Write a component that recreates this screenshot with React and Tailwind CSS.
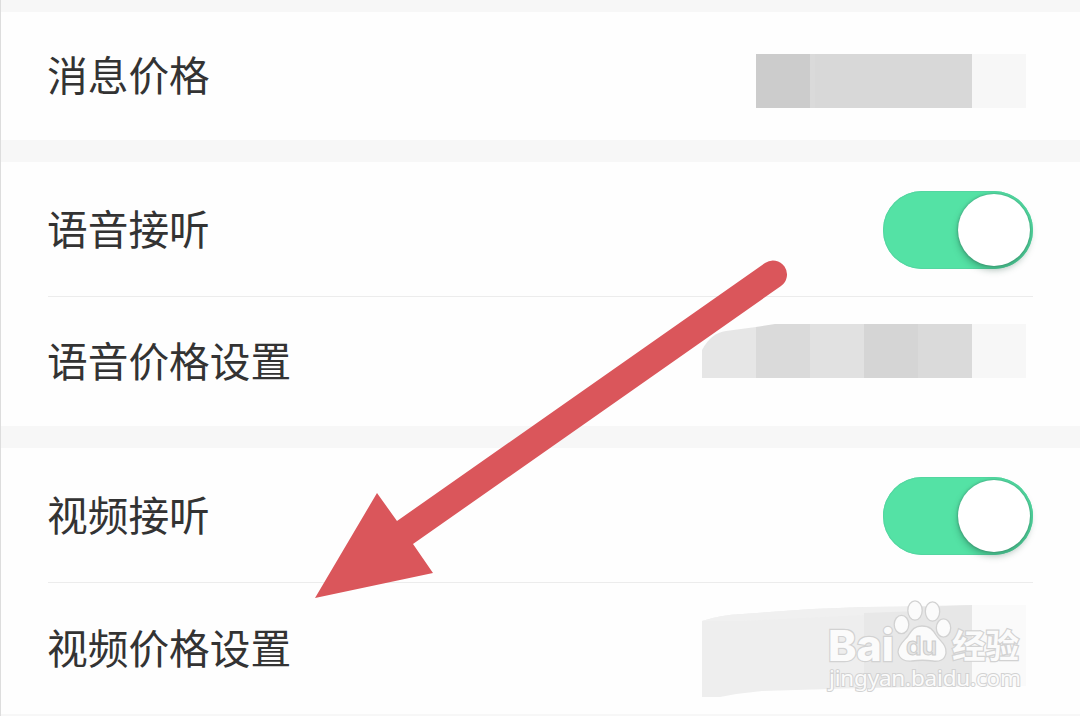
const voiceBlocks = [
  { x: 54, w: 54, fill: '#dadada' },
  { x: 108, w: 54, fill: '#e1e1e1' },
  { x: 162, w: 54, fill: '#d5d5d5' },
  { x: 216, w: 54, fill: '#dadada' },
]

function Toggle() {
  return (
    <div className="mt-[2px] flex h-[78px] w-[150px] items-center justify-end rounded-full bg-[#54e2a5] pr-[3px] shadow-[inset_0_0_0_1px_#54d6a1]">
      <div className="h-[72px] w-[72px] rounded-full bg-white shadow-[0_4px_7px_rgba(20,70,50,0.35),0_0_2px_1px_rgba(60,110,95,0.3)]" />
    </div>
  )
}

function Row({ label, divider, children, className = '' }) {
  return (
    <div className={`mx-[47px] flex items-center justify-between ${divider ? 'border-b border-[#ececec]' : ''} ${className}`}>
      <span className={`-ml-px text-[40.7px] leading-[60px] text-[#333333] ${divider ? 'mb-[2px]' : 'mb-[4px]'}`}>{label}</span>
      {children}
    </div>
  )
}

function MessagePrice() {
  return (
    <svg className="mr-[7px] mt-[10px] h-[54px] w-[270px]" viewBox="0 0 270 54" shapeRendering="crispEdges">
      <rect width="54" height="54" fill="#cccccc" />
      <rect x="54" width="162" height="54" fill="#d8d8d8" />
      <rect x="54" width="5" height="54" fill="#dadada" />
      <rect x="216" width="54" height="54" fill="#f7f7f7" />
    </svg>
  )
}

function VoicePrice() {
  return (
    <svg className="mr-[7px] mb-[21px] h-[54px] w-[324px]" viewBox="0 0 324 54">
      <path d="M0 54V26Q9 9 24 7L54 3V54Z" fill="#e6e6e6" />
      {voiceBlocks.map(b => (
        <path key={b.x} d={b.x === 54 ? 'M54 3L73 0H108V54H54Z' : `M${b.x} 0h${b.w}v54h-${b.w}Z`} fill={b.fill} />
      ))}
      <path d="M270 0H324V54H270Z" fill="#f7f7f7" />
    </svg>
  )
}

function VideoPrice() {
  return (
    <svg className="mr-[7px] mt-[5px] h-[92px] w-[324px]" viewBox="0 0 324 92">
      <path d="M0 16Q18 10 40 9L110 4L162 2V83L60 86Q38 88 18 92H0Z" fill="#eeeeee" />
      <path d="M0 16Q18 10 40 9L110 4L162 2L270 0V10L162 10L40 16Z" fill="#f0f0f0" />
      <path d="M162 8L270 4V81L162 83Z" fill="#e8e8e8" />
      <path d="M216 2L270 0V81H216Z" fill="#e7e7e7" />
      <path d="M270 0H324V81H270Z" fill="#fafafa" />
    </svg>
  )
}

function Arrow() {
  return (
    <svg className="pointer-events-none absolute left-0 top-0 h-[716px] w-[1080px]" viewBox="0 0 1080 716">
      <path d="M315 598L377 493L397 521L765 263A14 14 0 0 1 781 286L413 544L433 573Z" fill="#da565b" />
    </svg>
  )
}

function Watermark() {
  return (
    <svg className="pointer-events-none absolute left-[820px] top-[594px] h-[106px] w-[210px]" viewBox="820 594 210 106">
      <g fill="#fbfbfb" stroke="#d2d2d2" strokeWidth="1.3">
        <text x="828" y="660.5" fontSize="43" fontWeight="800" textLength="66" lengthAdjust="spacingAndGlyphs" paintOrder="stroke" strokeWidth="2.4" fontFamily="Inter, sans-serif">Bai</text>
        <ellipse cx="901.5" cy="624.5" rx="7.3" ry="9.2" />
        <ellipse cx="915" cy="610.5" rx="7.2" ry="9.6" />
        <ellipse cx="932.5" cy="611.5" rx="7.2" ry="9.6" />
        <ellipse cx="943.5" cy="628" rx="7.2" ry="9.2" />
        <path d="M922 626C930 626 933 630 936 635C940 641 947 645 946 653C945 660 939 662 933 661C926 660 919 660 912 661C905 662 899 659 898 652C898 645 904 641 908 636C912 630 914 626 922 626Z" />
        <text x="906" y="655" fontSize="25" fontWeight="600" textLength="31" lengthAdjust="spacingAndGlyphs" strokeWidth="1" fill="#e6e6e6" stroke="#cccccc" fontFamily="Inter, sans-serif">du</text>
        <text x="952" y="657.5" fontSize="33" fontWeight="700" textLength="67" lengthAdjust="spacingAndGlyphs" paintOrder="stroke" strokeWidth="2.4" fontFamily="Noto Sans CJK SC, sans-serif">经验</text>
        <text x="829" y="686" fontSize="22.5" textLength="192" lengthAdjust="spacing" paintOrder="stroke" strokeWidth="2" fontFamily="Noto Sans, sans-serif">jingyan.baidu.com</text>
      </g>
    </svg>
  )
}

export default function App() {
  return (
    <div className="relative h-[716px] w-[1080px] overflow-hidden bg-[#f7f7f7] font-['Noto_Sans_CJK_SC',sans-serif]">
      <div className="flex h-full flex-col gap-[22px] border-l border-[#dddddd] pt-3">
        <section className="bg-[#fefefe]">
          <Row label="消息价格" className="h-32">
            <MessagePrice />
          </Row>
        </section>

        <section className="bg-[#fefefe]">
          <Row label="语音接听" divider className="h-[135px]">
            <Toggle />
          </Row>
          <Row label="语音价格设置" className="h-[129px]">
            <VoicePrice />
          </Row>
        </section>

        <section className="bg-[#fefefe]">
          <Row label="视频接听" divider className="h-[135px]">
            <Toggle />
          </Row>
          <Row label="视频价格设置" className="h-[131px]">
            <VideoPrice />
          </Row>
        </section>
      </div>

      <Arrow />
      <Watermark />
    </div>
  )
}
